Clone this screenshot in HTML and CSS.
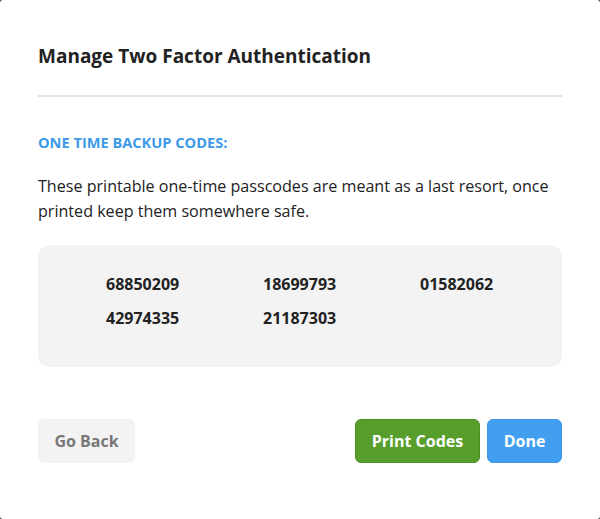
FILE: index.html
```html
<!DOCTYPE html>
<html>
<head>
<meta charset="utf-8">
<link rel="stylesheet" href="styles.css">
</head>
<body>
<div class="modal">
  <h2 class="title">Manage Two Factor Authentication</h2>
  <hr class="divider">
  <h3 class="section-label">ONE TIME BACKUP CODES:</h3>
  <p class="desc">These printable one-time passcodes are meant as a last resort, once printed keep them somewhere safe.</p>
  <div class="codes">
    <span class="code">68850209</span>
    <span class="code">18699793</span>
    <span class="code">01582062</span>
    <span class="code">42974335</span>
    <span class="code">21187303</span>
  </div>
  <div class="actions">
    <button class="btn btn-back">Go Back</button>
    <div class="right">
      <button class="btn btn-print">Print Codes</button>
      <button class="btn btn-done">Done</button>
    </div>
  </div>
</div>
</body>
</html>
```
FILE: styles.css
```css
html, body {
  margin: 0;
  padding: 0;
  background: #3a3a3a;
}
body {
  width: 600px;
  height: 519px;
  overflow: hidden;
  font-family: "Open Sans", "DejaVu Sans", sans-serif;
  color: #222;
}
.modal {
  box-sizing: border-box;
  width: 600px;
  height: 519px;
  background: #fff;
  border-radius: 3px;
  padding: 44px 38px 0;
}
.title {
  margin: 0;
  font-size: 19px;
  line-height: 24px;
  font-weight: 700;
  color: #222;
}
.divider {
  margin: 27px 0 0;
  border: 0;
  height: 2px;
  background: #e2e2e2;
}
.section-label {
  margin: 35px 0 0;
  font-size: 14.6px;
  line-height: 20px;
  font-weight: 700;
  color: #3d9ae8;
}
.desc {
  margin: 22px 0 0;
  font-size: 16.1px;
  line-height: 25px;
  color: #222;
}
.codes {
  margin-top: 21px;
  background: #f3f3f3;
  border-radius: 12px;
  height: 122px;
  box-sizing: border-box;
  padding: 27px 0 0 68px;
  display: grid;
  grid-template-columns: repeat(3, 157px);
  grid-auto-rows: 24px;
  row-gap: 10px;
  align-content: start;
}
.code {
  font-size: 16px;
  line-height: 24px;
  font-weight: 700;
  color: #222;
}
.actions {
  margin-top: 52px;
  display: flex;
  justify-content: space-between;
}
.right {
  display: flex;
  gap: 7px;
}
.btn {
  font-family: "Open Sans", "DejaVu Sans", sans-serif;
  font-size: 16px;
  font-weight: 700;
  height: 44px;
  border-radius: 6px;
  border: 1px solid transparent;
  padding: 0;
  white-space: nowrap;
  text-align: center;
  cursor: pointer;
}
.btn-back {
  background: #f3f3f3;
  color: #777;
  border-color: #f3f3f3;
  width: 97px;
}
.btn-print {
  background: #579e2d;
  border-color: #4d8f27;
  color: #fff;
  width: 125px;
}
.btn-done {
  background: #429ff0;
  border-color: #3d97e6;
  color: #fff;
  width: 75px;
}
```
